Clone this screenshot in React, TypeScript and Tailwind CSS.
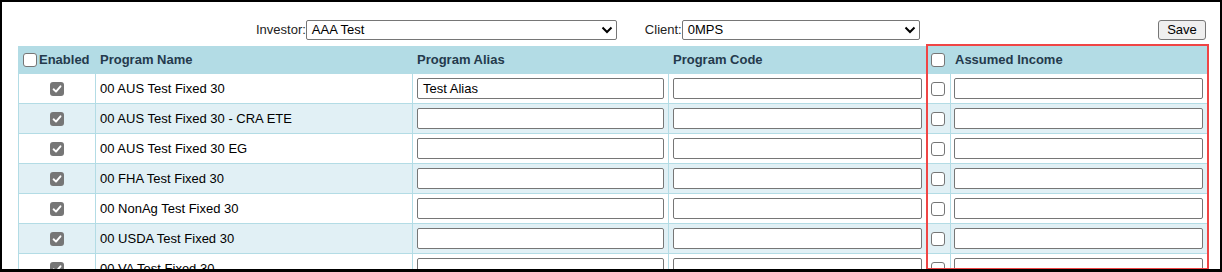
import React from 'react';

const rows = [
  { name: '00 AUS Test Fixed 30', alias: 'Test Alias' },
  { name: '00 AUS Test Fixed 30 - CRA ETE', alias: '' },
  { name: '00 AUS Test Fixed 30 EG', alias: '' },
  { name: '00 FHA Test Fixed 30', alias: '' },
  { name: '00 NonAg Test Fixed 30', alias: '' },
  { name: '00 USDA Test Fixed 30', alias: '' },
  { name: '00 VA Test Fixed 30', alias: '' },
];

const Checked = () => (
  <span className="inline-flex w-[14px] h-[14px] rounded-[3px] bg-[#767676] items-center justify-center align-middle">
    <svg width="10" height="10" viewBox="0 0 10 10">
      <path d="M1.6 5.3 L4 7.6 L8.5 2.3" fill="none" stroke="#fff" strokeWidth="1.9" strokeLinecap="round" strokeLinejoin="round" />
    </svg>
  </span>
);

const Unchecked = () => (
  <span className="inline-block w-[14px] h-[14px] rounded-[3px] border-[1.5px] border-[#767676] bg-white align-middle" />
);

const Select = ({ value, width }: { value: string; width: string }) => (
  <div className={`${width} h-[20px] border border-[#767676] rounded-[2px] bg-white flex items-center justify-between pl-[5px] pr-[3px]`}>
    <span>{value}</span>
    <svg width="12" height="8" viewBox="0 0 12 8">
      <path d="M1.5 1.5 L6 6 L10.5 1.5" fill="none" stroke="#000" strokeWidth="2" />
    </svg>
  </div>
);

const TextBox = ({ value = '' }: { value?: string }) => (
  <div className="h-[21px] border border-[#767676] rounded-[2px] bg-white flex items-center px-[5px] text-black">
    {value}
  </div>
);

export default function App() {
  const cell = 'border border-[#b3dce5] align-middle';
  return (
    <div className="relative w-[1222px] h-[272px] overflow-hidden bg-white border-black border-t-2 border-l-2 border-r-2 border-b-[3px] font-['Liberation_Sans',Arial,sans-serif] text-[13px] text-black">
      {/* Filters */}
      <div className="flex items-center mt-[18px] h-[20px]">
        <div className="flex items-center ml-[254px]">
          <span className="text-[#222]">Investor:</span>
          <Select value="AAA Test" width="w-[311px]" />
        </div>
        <div className="flex items-center ml-[28px]">
          <span className="text-[#222]">Client:</span>
          <Select value="0MPS" width="w-[238px]" />
        </div>
        <button className="ml-auto mr-[14px] w-[48px] h-[20px] bg-[#efefef] border border-[#767676] rounded-[3px] flex items-center justify-center">
          Save
        </button>
      </div>

      {/* Grid */}
      <table className="mt-[6px] ml-[16px] table-fixed border-collapse w-[1189px]">
        <colgroup>
          <col className="w-[77px]" />
          <col className="w-[317px]" />
          <col className="w-[256px]" />
          <col className="w-[258px]" />
          <col className="w-[24px]" />
          <col className="w-[257px]" />
        </colgroup>
        <thead>
          <tr className="h-[27px] bg-[#b3dce5] text-[#243a4c] font-bold text-left">
            <th className={`${cell} pl-[4px] pr-0`}>
              <span className="flex items-center gap-[2px]">
                <Unchecked />
                Enabled
              </span>
            </th>
            <th className={`${cell} pl-[4px]`}>Program Name</th>
            <th className={`${cell} pl-[4px]`}>Program Alias</th>
            <th className={`${cell} pl-[4px]`}>Program Code</th>
            <th className={`${cell} pl-[4px]`}>
              <span className="flex"><Unchecked /></span>
            </th>
            <th className={`${cell} pl-[4px]`}>Assumed Income</th>
          </tr>
        </thead>
        <tbody>
          {rows.map((r, i) => (
            <tr key={r.name} className={`h-[30px] ${i % 2 === 1 ? 'bg-[#e1f0f5]' : 'bg-white'}`}>
              <td className={`${cell} text-center`}>
                <span className="flex justify-center"><Checked /></span>
              </td>
              <td className={`${cell} pl-[4px] whitespace-nowrap`}>{r.name}</td>
              <td className={`${cell} px-[4px]`}><TextBox value={r.alias} /></td>
              <td className={`${cell} px-[4px]`}><TextBox /></td>
              <td className={`${cell} pl-[4px]`}>
                <span className="flex"><Unchecked /></span>
              </td>
              <td className={`${cell} pl-[3px] pr-[4px]`}><TextBox /></td>
            </tr>
          ))}
        </tbody>
      </table>

      {/* Highlight annotation */}
      <div className="absolute left-[924px] top-[42px] w-[283px] h-[226px] border-2 border-[#f04545] pointer-events-none" />
    </div>
  );
}
